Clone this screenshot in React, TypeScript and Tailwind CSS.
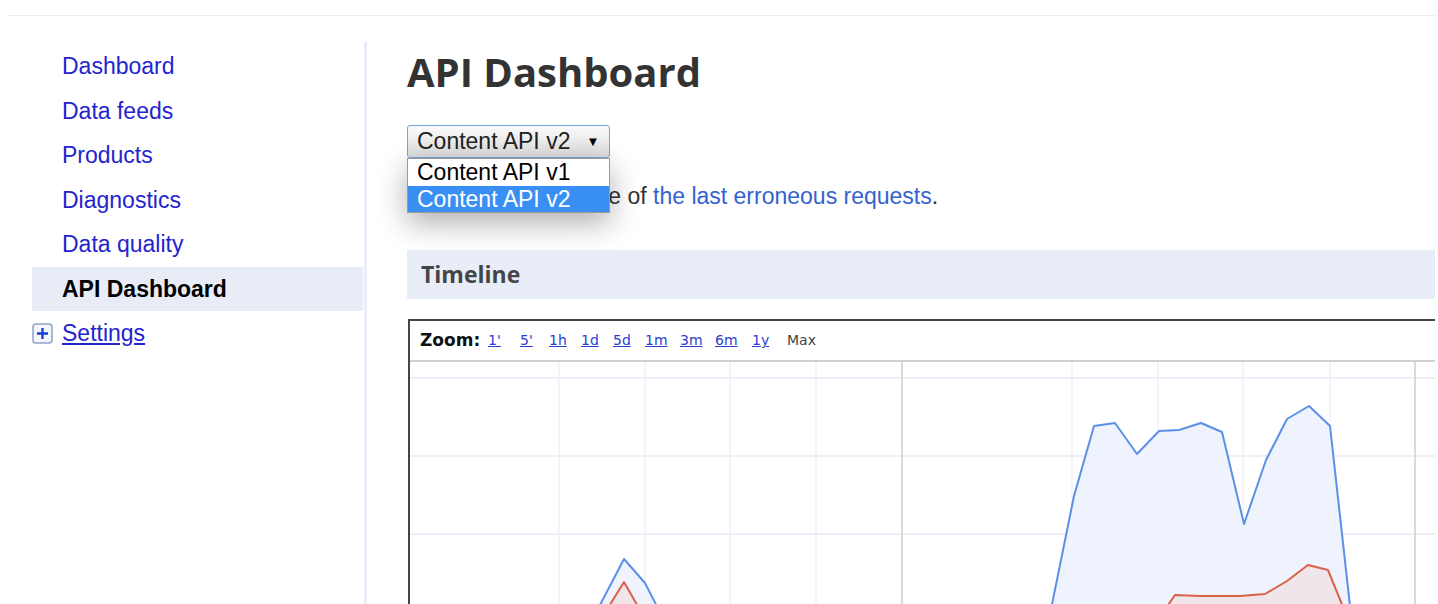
import React from "react";

const navItems = ["Dashboard", "Data feeds", "Products", "Diagnostics", "Data quality"];

const zoomLinks = [
  { label: "1'", w: "w-[32px]" },
  { label: "5'", w: "w-[29px]" },
  { label: "1h", w: "w-[32px]" },
  { label: "1d", w: "w-[32px]" },
  { label: "5d", w: "w-[32px]" },
  { label: "1m", w: "w-[35px]" },
  { label: "3m", w: "w-[35px]" },
  { label: "6m", w: "w-[37px]" },
  { label: "1y", w: "w-[35px]" },
];

// chart coordinates are relative to the top-left of the plot area
const hGrid = [16, 94, 172, 250];
const vGrid = [149, 235, 320, 406, 662, 748, 833, 920];
const vGridDark = [492, 1005];

const blueLeft = "180,262 214,197 235,221 256,262";
const redLeft = "188,262 214,220 238,262";
const blueRight =
  "638,262 664,134 684,64 705,61 727,92 749,69 769,68 791,61 812,70 834,162 856,98 877,57 899,44 920,64 942,262";
const redRight =
  "745,262 765,233 790,234 830,234 855,232 877,219 898,203 918,208 940,262";

const Chart = () => (
  <svg width="1060" height="262" className="block">
    {hGrid.map((y) => (
      <line key={"h" + y} x1="0" x2="1060" y1={y} y2={y} stroke="#eceff7" strokeWidth="2" />
    ))}
    {vGrid.map((x) => (
      <line key={"v" + x} x1={x} x2={x} y1="0" y2="262" stroke="#eef0f4" strokeWidth="1.5" />
    ))}
    {vGridDark.map((x) => (
      <line key={"d" + x} x1={x} x2={x} y1="0" y2="262" stroke="#d6ddd6" strokeWidth="2" />
    ))}
    <polygon points={blueLeft} fill="#eef3fd" />
    <polygon points={blueRight} fill="#eef3fd" />
    <polygon points={redLeft} fill="#efe5ea" />
    <polygon points={redRight} fill="#efe5ea" />
    <polyline points={blueLeft} fill="none" stroke="#5b8fe8" strokeWidth="2" strokeLinejoin="round" />
    <polyline points={blueRight} fill="none" stroke="#5b8fe8" strokeWidth="2" strokeLinejoin="round" />
    <polyline points={redLeft} fill="none" stroke="#db6149" strokeWidth="2" strokeLinejoin="round" />
    <polyline points={redRight} fill="none" stroke="#db6149" strokeWidth="2" strokeLinejoin="round" />
  </svg>
);

const PlusBox = () => (
  <svg width="21" height="21" viewBox="0 0 21 21" className="block">
    <rect x="1" y="1" width="19" height="19" rx="3" fill="#f4f6fb" stroke="#8fa3c9" strokeWidth="1.5" />
    <path d="M10.5 5v11M5 10.5h11" stroke="#1c3fd3" strokeWidth="2.4" />
  </svg>
);

const App = () => {
  return (
    <div className="w-[1438px] h-[604px] overflow-hidden bg-white font-['Liberation_Sans',Arial,sans-serif]">
      <div className="h-[16px] mx-[8px] mr-[3px] border-b border-[#ededed]" />
      <div className="flex">
        <aside className="w-[364px] shrink-0 pt-[28px] pl-[32px]">
          <ul className="w-[331px]">
            {navItems.map((item) => (
              <li key={item} className="h-[44.5px] flex items-center pl-[30px] text-[23px] text-[#2424cf]">
                {item}
              </li>
            ))}
            <li className="h-[44.5px] flex items-center pl-[30px] text-[23px] font-bold text-black bg-[#e8ecf7]">
              API Dashboard
            </li>
            <li className="h-[44.5px] flex items-center text-[23px] text-[#2424cf]">
              <span className="w-[30px]">
                <PlusBox />
              </span>
              <span className="underline underline-offset-2">Settings</span>
            </li>
          </ul>
        </aside>
        <div className="w-[3px] shrink-0 mt-[26px] h-[600px] bg-[#e9edf8]" />
        <main className="w-[1068px] overflow-hidden pl-[40px] pt-[31.5px]">
          <h1 className="font-['Open_Sans',sans-serif] font-bold text-[40px] leading-[48px] text-[#333333]">
            API Dashboard
          </h1>

          <div className="relative mt-[29.5px] h-[33px] w-[203px]">
            <div className="h-[33px] w-[203px] rounded-[3px] border border-[#77a3df] bg-gradient-to-b from-[#fafafa] to-[#dcdcdc] flex items-center pl-[9px] text-[23px] text-[#222222]">
              <span>Content API v2</span>
              <span className="ml-[16px] text-[13px] text-black">▼</span>
            </div>
            <div className="absolute left-0 top-[33px] z-10 w-[203px] border border-[#9a9a9a] bg-white shadow-[0_10px_30px_rgba(0,0,0,0.32)] text-[23px]">
              <div className="h-[27px] leading-[27px] pl-[9px] text-black">Content API v1</div>
              <div className="h-[26px] leading-[26px] pl-[9px] text-white bg-[#3a8ff4]">Content API v2</div>
            </div>
          </div>

          <p className="mt-[24px] h-[28px] leading-[28px] text-[23px] text-[#333333] whitespace-nowrap">
            Here's also a sample of <span className="text-[#3462cf]">the last erroneous requests</span>.
          </p>

          <div className="mt-[40px] h-[49px] bg-[#e8edf8] flex items-center pl-[14px] font-['Open_Sans',sans-serif] font-bold text-[23px] text-[#454545]">
            Timeline
          </div>

          <div className="mt-[20px] ml-[1px] w-[1060px] border-t-2 border-l-2 border-[#444444]">
            <div className="h-[41px] flex items-center pl-[10px] border-b-2 border-[#d0d0d0] font-['DejaVu_Sans',sans-serif]">
              <span className="w-[68px] font-bold text-[17px] text-[#111111]">Zoom:</span>
              {zoomLinks.map((z) => (
                <span key={z.label} className={z.w + " text-[14px] text-[#2b3fcc] underline"}>
                  {z.label}
                </span>
              ))}
              <span className="text-[14px] text-[#444444]">Max</span>
            </div>
            <Chart />
          </div>
        </main>
      </div>
    </div>
  );
};

export default App;
